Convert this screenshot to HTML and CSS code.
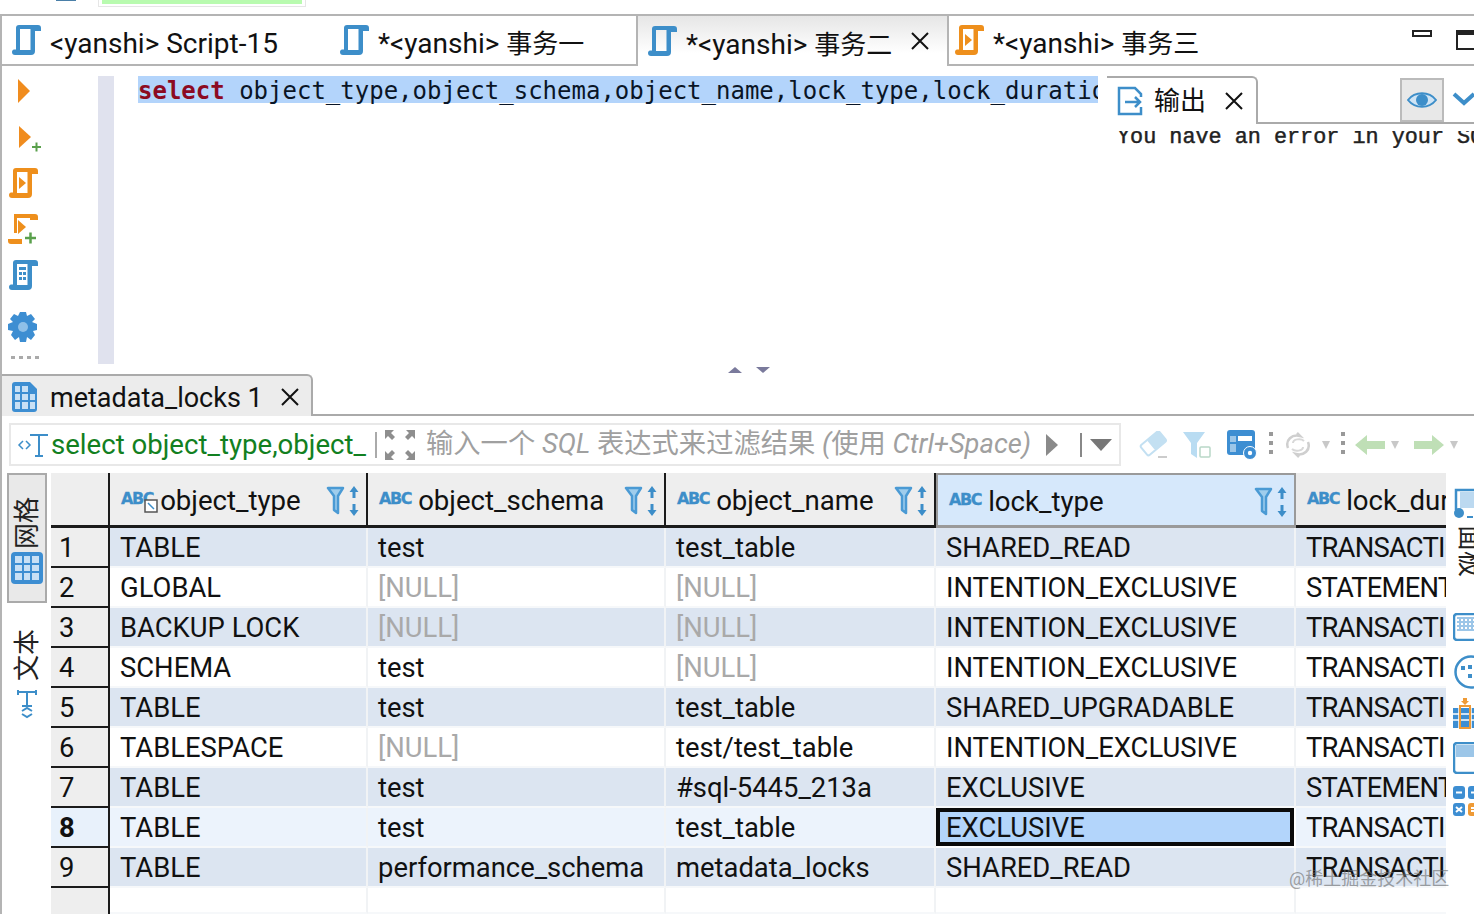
FILE: index.html
```html
<!DOCTYPE html>
<html lang="zh">
<head>
<meta charset="utf-8">
<title>DBeaver</title>
<link rel="stylesheet" href="styles.css">
</head>
<body>
<svg class="defs" width="0" height="0">
  <symbol id="scroll" viewBox="0 0 29 30"><path fill="currentColor" fill-rule="evenodd" d="M7 0H26a3 3 0 0 1 3 3v3h-6v20a4 4 0 0 1-4 4H3a3 3 0 0 1-3-3c0-1.500 1-2.500 2-2.500h2V3a3 3 0 0 1 3-3zM8 4v21h10.500V4z"/></symbol>
  <symbol id="funnel" viewBox="0 0 34 30"><path fill="#9fcdec" stroke="#4a9ad4" stroke-width="2.500" stroke-linejoin="round" d="M2 2h15l-5 8v17l-4-3V10z"/><path fill="#3d8ec9" d="M28 0l4.500 6h-3v6h-3V6h-3zM26.500 18h3v6h3L28 30l-4.500-6h3z"/></symbol>
  <symbol id="x" viewBox="0 0 20 20"><path fill="none" stroke="#111" stroke-width="2" d="M2 2l16 16M18 2L2 18"/></symbol>
</svg>
<div class="strip"><div class="strip-blue"></div><div class="strip-box"><div class="strip-green"></div></div></div>
<div class="app">
  <div class="tabbar">
    <div class="tab tab-1"><svg class="i-tab blue"><use href="#scroll"/></svg><span class="tl">&lt;yanshi&gt; Script-15</span></div>
    <div class="tab tab-2"><svg class="i-tab blue"><use href="#scroll"/></svg><span class="tl">*&lt;yanshi&gt; <span class="cjk">事务一</span></span></div>
    <div class="tab tab-3"><svg class="i-tab blue"><use href="#scroll"/></svg><span class="tl">*&lt;yanshi&gt; <span class="cjk">事务二</span></span><svg class="i-x"><use href="#x"/></svg></div>
    <div class="tab tab-4"><svg class="i-tab orange" viewBox="0 0 29 30"><use href="#scroll"/><path fill="currentColor" d="M10 9l7 6-7 6z"/></svg><span class="tl">*&lt;yanshi&gt; <span class="cjk">事务三</span></span></div>
    <div class="win-btns"><span class="win-min"></span><span class="win-max"></span></div>
  </div>
  <div class="editor">
    <div class="tools">
      <div class="tool"><svg class="t-run" width="14" height="24" viewBox="0 0 14 24"><path fill="#f08c1e" d="M1 0l12 12L1 24z"/></svg></div>
      <div class="tool"><svg class="t-plus" width="24" height="26" viewBox="0 0 24 26"><path fill="#f08c1e" d="M1 0l12 11L1 22z"/><path stroke="#5aa04c" stroke-width="2" d="M14 21h9M18.500 16.500v9"/></svg></div>
      <div class="tool"><svg class="orange" width="29" height="30" viewBox="0 0 29 30"><use href="#scroll"/><path fill="currentColor" d="M10 9l7 6-7 6z"/></svg></div>
      <div class="tool"><svg class="orange" width="31" height="32" viewBox="0 0 31 32"><path fill="currentColor" d="M6 1h21a3 3 0 0 1 3 3v3h-8V5H9v15H6zM0 26h14v5H3a3 3 0 0 1-3-3z"/><path fill="currentColor" d="M10 7l8 7-8 7z"/><path stroke="#5aa04c" stroke-width="2.500" d="M17 25h11M22.500 19.500v11"/></svg></div>
      <div class="tool"><svg class="blue" width="29" height="30" viewBox="0 0 29 30"><use href="#scroll"/><path fill="currentColor" d="M10 7h7v3h-7zM10 12h3v3h-3zM14 12h3v3h-3zM10 17h3v3h-3zM14 17h3v3h-3z"/></svg></div>
      <div class="tool tool-gear"><svg width="30" height="30" viewBox="0 0 30 30"><path fill="#3d8ed2" d="M12 0h6l1 4 4-2 4 5-3 3 5 2v6l-4 1 2 4-4 5-4-3-1 5h-6l-1-5-4 3-4-5 2-4-5-1v-6l5-2-3-3 4-5 4 2z"/><circle cx="15" cy="15" r="5" fill="#8fc0e8"/></svg></div>
      <div class="tool-dots"></div>
    </div>
    <div class="ruler"></div>
    <div class="code"><span class="sel"><b>select</b> object_type,object_schema,object_name,lock_type,lock_duration,lock_status,source from performance_schema.metadata_locks</span></div>
    <div class="output">
      <div class="out-head">
        <div class="out-tab"><svg class="i-out" width="26" height="30" viewBox="0 0 26 30"><path fill="none" stroke="#3d8ec9" stroke-width="2.500" d="M24 11V8l-6-6H2v26h22v-7"/><path fill="none" stroke="#3d8ec9" stroke-width="2.500" d="M8 16h15M18 11l5 5-5 5"/></svg>输出<svg class="i-x"><use href="#x"/></svg></div>
        <div class="out-fill"><span class="eye-btn"><svg width="30" height="20" viewBox="0 0 30 20"><path fill="#cfe4f5" stroke="#3d8ec9" stroke-width="2" d="M1 10C8 1 22 1 29 10 22 19 8 19 1 10z"/><circle cx="15" cy="10" r="6" fill="#3d8ec9"/></svg></span><svg class="chev" width="22" height="14" viewBox="0 0 22 14"><path fill="none" stroke="#3d8ec9" stroke-width="4" d="M2 2l10 9 10-9"/></svg></div>
      </div>
      <div class="out-text">You have an error in your SQL syntax</div>
    </div>
  </div>
  <div class="sash"><span class="sash-up"></span><span class="sash-down"></span></div>
  <div class="res-tabs"><div class="res-tab"><svg width="26" height="30" viewBox="0 0 26 30"><path fill="#3d8ed2" d="M3 0h15l7 7v20a3 3 0 0 1-3 3H3a3 3 0 0 1-3-3V3a3 3 0 0 1 3-3z"/><path fill="#c8e0f5" d="M3 4h5v6H3zM10 4h6v6h-6zM3 12h5v6H3zM10 12h6v6h-6zM18 12h5v6h-5zM3 20h5v7H3zM10 20h6v7h-6zM18 20h5v7h-5z"/></svg>metadata_locks 1<svg class="i-x"><use href="#x"/></svg></div></div>
  <div class="filter-row">
    <div class="filter">
      <svg class="f-t" width="32" height="26" viewBox="0 0 32 26"><path fill="none" stroke="#3d8ec9" stroke-width="1.500" d="M6 9l-4 4 4 4M9 9l4 4-4 4"/><path fill="none" stroke="#3d8ec9" stroke-width="2" d="M13 3h18M22 3v21M18 24h8"/></svg>
      <span class="f-sql">select object_type,object_</span>
      <span class="f-sep"></span>
      <svg class="f-expand" width="30" height="30" viewBox="0 0 30 30"><path fill="#8e8e8e" d="M0 0h9L6 3l4 4-3 3-4-4-3 3zM30 0v9l-3-3-4 4-3-3 4-4-3-3zM0 30v-9l3 3 4-4 3 3-4 4 3 3zM30 30h-9l3-3-4-4 3-3 4 4 3-3z"/></svg>
      <span class="f-hint">输入一个 <i>SQL</i> 表达式来过滤结果 <i>(</i>使用 <i>Ctrl+Space)</i></span>
      <span class="f-play"></span>
      <span class="f-sep2"></span>
      <span class="f-drop"></span>
    </div>
    <div class="bar">
      <svg width="30" height="28" viewBox="0 0 30 28"><g transform="rotate(-40 14 12)"><rect x="2" y="6" width="24" height="13" rx="2" fill="#fff" stroke="#c3e0f2" stroke-width="2"/><rect x="11" y="6" width="15" height="13" rx="2" fill="#c3e0f2"/></g><path stroke="#ccc" stroke-width="2" d="M19 26h9"/></svg>
      <svg width="30" height="28" viewBox="0 0 30 28"><path fill="#b9dcf2" d="M1 1h22l-8 11v15l-6-4V12z"/><rect x="18" y="16" width="10" height="10" rx="1" fill="#fff" stroke="#b9d8c8" stroke-width="1.500"/></svg>
      <svg width="30" height="30" viewBox="0 0 30 30"><rect x="0" y="0" width="28" height="25" rx="3" fill="#3d8ed2"/><path fill="#fff" d="M11 6h14v5H11z"/><path fill="#9cc6e8" d="M3 6h6v6H3zM3 14h6v8H3z"/><circle cx="23" cy="23" r="6.500" fill="#3d8ed2" stroke="#fff"/><circle cx="23" cy="23" r="2.200" fill="#fff"/></svg>
      <span class="bar-dots"></span>
      <svg class="b-ref" width="26" height="28" viewBox="0 0 26 28"><path fill="none" stroke="#cfcfcf" stroke-width="2.500" d="M3 17C0 9 7 3 15 5l-3-3M23 11c3 8-4 14-12 12l3 3"/><path fill="none" stroke="#d8d8d8" stroke-width="2" d="M8 12c0-4 8-5 11-2M18 16c0 4-8 5-11 2"/></svg>
      <span class="b-tri"></span>
      <span class="bar-dots d2"></span>
      <svg class="b-l" width="30" height="20" viewBox="0 0 30 20"><path fill="#bfdfb6" d="M0 10L12 0v6h18v8H12v6z"/></svg>
      <span class="b-tri t2"></span>
      <svg class="b-r" width="30" height="20" viewBox="0 0 30 20"><path fill="#bfdfb6" d="M30 10L18 0v6H0v8h18v6z"/></svg>
      <span class="b-tri t2"></span>
    </div>
  </div>
  <div class="body">
    <div class="side">
      <div class="side-active"><span class="vtext">网格</span><svg width="32" height="32" viewBox="0 0 32 32"><rect width="32" height="32" rx="4" fill="#3d8ed2"/><path fill="#c8e0f5" d="M4 4h7v7H4zM13 4h6v7h-6zM21 4h7v7h-7zM4 13h7v6H4zM13 13h6v6h-6zM21 13h7v6h-7zM4 21h7v7H4zM13 21h6v7h-6zM21 21h7v7h-7z"/></svg></div>
      <div class="side-idle"><span class="vtext">文本</span><svg width="20" height="30" viewBox="0 0 20 30"><path fill="none" stroke="#3d8ec9" stroke-width="2" d="M1 1v5M1 3h18M19 1v5M10 3v14M5 17h10M5 22l5-3 5 3M5 25l5 3 5-3"/></svg></div>
    </div>
    <div class="grid">
      <div class="hd corner"></div>
      <div class="hd"><span class="abc">ABC</span><svg class="key" width="14" height="14" viewBox="0 0 14 14"><rect x="1" y="1" width="12" height="12" fill="#fff" stroke="#555" stroke-width="1.500"/><path stroke="#3d8ec9" stroke-width="1.500" d="M4 4l6 6"/></svg><span class="hd-name">object_type</span><svg class="fn"><use href="#funnel"/></svg></div>
      <div class="hd"><span class="abc">ABC</span><span class="hd-name">object_schema</span><svg class="fn"><use href="#funnel"/></svg></div>
      <div class="hd"><span class="abc">ABC</span><span class="hd-name">object_name</span><svg class="fn"><use href="#funnel"/></svg></div>
      <div class="hd hd-sel"><span class="abc">ABC</span><span class="hd-name">lock_type</span><svg class="fn"><use href="#funnel"/></svg></div>
      <div class="hd hd-last"><span class="abc">ABC</span><span class="hd-name">lock_duration</span></div>

      <div class="rh">1</div><div class="c odd">TABLE</div><div class="c odd">test</div><div class="c odd">test_table</div><div class="c odd">SHARED_READ</div><div class="c odd last">TRANSACTION</div>
      <div class="rh">2</div><div class="c">GLOBAL</div><div class="c nul">[NULL]</div><div class="c nul">[NULL]</div><div class="c">INTENTION_EXCLUSIVE</div><div class="c last">STATEMENT</div>
      <div class="rh">3</div><div class="c odd">BACKUP LOCK</div><div class="c odd nul">[NULL]</div><div class="c odd nul">[NULL]</div><div class="c odd">INTENTION_EXCLUSIVE</div><div class="c odd last">TRANSACTION</div>
      <div class="rh">4</div><div class="c">SCHEMA</div><div class="c">test</div><div class="c nul">[NULL]</div><div class="c">INTENTION_EXCLUSIVE</div><div class="c last">TRANSACTION</div>
      <div class="rh">5</div><div class="c odd">TABLE</div><div class="c odd">test</div><div class="c odd">test_table</div><div class="c odd">SHARED_UPGRADABLE</div><div class="c odd last">TRANSACTION</div>
      <div class="rh">6</div><div class="c">TABLESPACE</div><div class="c nul">[NULL]</div><div class="c">test/test_table</div><div class="c">INTENTION_EXCLUSIVE</div><div class="c last">TRANSACTION</div>
      <div class="rh">7</div><div class="c odd">TABLE</div><div class="c odd">test</div><div class="c odd">#sql-5445_213a</div><div class="c odd">EXCLUSIVE</div><div class="c odd last">STATEMENT</div>
      <div class="rh rh-sel">8</div><div class="c cur">TABLE</div><div class="c cur">test</div><div class="c cur">test_table</div><div class="c cell-sel">EXCLUSIVE</div><div class="c cur last">TRANSACTION</div>
      <div class="rh">9</div><div class="c odd">TABLE</div><div class="c odd">performance_schema</div><div class="c odd">metadata_locks</div><div class="c odd">SHARED_READ</div><div class="c odd last">TRANSACTION</div>
      <div class="rh rh-end"></div><div class="c"></div><div class="c"></div><div class="c"></div><div class="c"></div><div class="c last"></div>
    </div>
    <div class="rside">
      <svg class="r1" width="26" height="32" viewBox="0 0 26 32"><path fill="none" stroke="#3d8ec9" stroke-width="2.500" d="M3 22V2h23"/><rect x="7" y="4" width="19" height="16" fill="#bcd9f0"/><circle cx="6" cy="25" r="5" fill="#3d8ec9"/><path stroke="#3d8ec9" stroke-width="2" d="M14 29h6"/></svg>
      <span class="rtext">面板</span>
      <svg class="r2" width="26" height="28" viewBox="0 0 26 28"><rect x="1" y="1" width="30" height="26" rx="3" fill="#fff" stroke="#3d8ec9" stroke-width="2.500"/><rect x="4" y="4" width="22" height="14" fill="#9cc6e8"/><path stroke="#fff" stroke-dasharray="2 2" stroke-width="2" d="M4 7h22M4 11h22M4 15h22"/></svg>
      <svg class="r3" width="26" height="34" viewBox="0 0 26 34"><circle cx="18" cy="17" r="15.500" fill="#fff" stroke="#3d8ec9" stroke-width="2.500"/><path fill="#3d8ec9" d="M8 11h4v4H8zM15 10h4v4h-4zM22 10h4v4h-4zM15 19h4v4h-4zM22 19h4v4h-4z"/></svg>
      <svg class="r4" width="26" height="32" viewBox="0 0 26 32"><rect x="0" y="10" width="26" height="20" fill="#3d8ed2"/><path stroke="#fff" stroke-width="1.500" d="M0 16h26M0 22h26M6 10v20M18 10v20"/><rect x="7" y="8" width="10" height="22" fill="none" stroke="#ee9a36" stroke-width="2"/><path fill="#ee9a36" d="M10 0h4v3h2l-4 4-4-4h2z"/></svg>
      <svg class="r5" width="26" height="32" viewBox="0 0 26 32"><rect x="1" y="1" width="30" height="30" rx="3" fill="#fff" stroke="#3d8ec9" stroke-width="2.500"/><rect x="3" y="3" width="23" height="12" fill="#9cc6e8"/></svg>
      <svg class="r6" width="26" height="30" viewBox="0 0 26 30"><rect x="0" y="0" width="12" height="13" rx="3" fill="#3d8ed2"/><rect x="15" y="0" width="12" height="13" rx="3" fill="#3d8ed2"/><rect x="0" y="17" width="12" height="13" rx="3" fill="#3d8ed2"/><rect x="15" y="17" width="12" height="13" rx="3" fill="#ee9a36"/><path stroke="#fff" stroke-width="2" d="M3 6.500h6M18 6.500h6M3 21l6 5M9 21l-6 5M18 22h6M18 25h6"/></svg>
    </div>
  </div>
</div>
<div class="watermark">@稀土掘金技术社区</div>
</body>
</html>
```
FILE: styles.css
```css
* { box-sizing: border-box; }
html, body { margin: 0; padding: 0; }
body {
  position: relative;
  width: 1474px;
  height: 914px;
  overflow: hidden;
  background: #fff;
  color: #111;
  font-family: Roboto, "Noto Sans CJK SC", sans-serif;
  font-size: 27.4px;
}
svg { display: block; flex: none; }
.defs { position: absolute; }
.blue { color: #3d8ec9; }
.orange { color: #ee8f1c; }

.strip { height: 14px; display: flex; align-items: flex-start; }
.strip-blue { width: 20px; height: 1px; margin-left: 56px; background: #4a7fa8; }
.strip-box { width: 208px; height: 7px; margin-left: 22px; padding: 0 3px; background: #fff; border: 1px solid #e6e6e6; border-top: 0; }
.strip-green { height: 4px; background: #b9fbb0; }

.app { height: 900px; border-left: 2px solid #b4b4b4; display: flex; flex-direction: column; }

.tabbar {
  height: 52px;
  flex: none;
  display: flex;
  align-items: stretch;
  border-top: 2px solid #b4b4b4;
  border-bottom: 2px solid #b4b4b4;
  white-space: nowrap;
  font-size: 28px;
  line-height: 30px;
}
.tab { display: flex; align-items: center; padding-left: 10px; }
.tl { margin-top: 8px; }
.cjk { font-size: 26px; }
.i-tab { width: 29px; height: 30px; margin-right: 9px; }
.tab-1 { width: 329px; }
.tab-2 { width: 307px; border-right: 2px solid #b4b4b4; padding-left: 9px; }
.tab-3 {
  width: 309px;
  margin-bottom: -2px;
  background: linear-gradient(#e6e6e6, #fff 75%);
}
.tab-4 { width: 448px; border-left: 2px solid #b4b4b4; padding-left: 6px; }
.i-x { width: 20px; height: 20px; margin-left: 18px; }
.win-btns { display: flex; align-items: flex-start; margin-left: 17px; padding-top: 14px; overflow: hidden; flex: 1; }
.win-min { width: 20px; height: 7px; border: 2px solid #222; flex: none; }
.win-max { width: 24px; height: 20px; margin-left: 24px; border: 2px solid #222; border-top-width: 5px; flex: none; }

.editor { height: 298px; flex: none; display: flex; }
.tools { width: 96px; flex: none; padding: 2px 0 0 6px; display: flex; flex-direction: column; align-items: flex-start; }
.tool { height: 46px; width: 30px; display: flex; align-items: center; justify-content: center; }
.t-run { margin-left: 2px; }
.t-plus { margin: 3px 0 0 13px; }
.tool-gear { margin-top: 6px; }
.tool-dots { width: 29px; height: 3px; margin: 6px 0 0 3px; background: repeating-linear-gradient(90deg, #aaa 0 4px, transparent 4px 8px); }
.ruler { width: 16px; flex: none; margin-top: 10px; background: #e0e2ee; }
.code {
  width: 984px;
  flex: none;
  padding: 10px 0 0 24px;
  overflow: hidden;
  white-space: nowrap;
  font: 24px/24px "DejaVu Sans Mono", monospace;
  color: #0a1526;
}
.sel { display: inline-block; padding-top: 3px; background: #b3d4fb; }
.sel b { color: #8c0a22; }
.output { flex: 1; min-width: 0; margin-left: 9px; padding-top: 10px; overflow: hidden; }
.out-head { display: flex; height: 48px; }
.out-tab {
  width: 151px;
  flex: none;
  display: flex;
  align-items: center;
  padding-left: 10px;
  border-top: 2px solid #aaa;
  border-right: 2px solid #aaa;
  border-top-right-radius: 6px;
  white-space: nowrap;
  line-height: 30px;
  font-size: 26px;
}
.i-out { margin-right: 11px; }
.out-fill { flex: 1; display: flex; align-items: flex-start; padding-left: 142px; border-bottom: 2px solid #aaa; }
.eye-btn { width: 44px; height: 44px; margin-top: 2px; display: flex; align-items: center; justify-content: center; background: #e8e8e8; border: 2px solid #bbb; }
.chev { margin: 16px 0 0 8px; }
.out-text {
  height: 28px;
  margin-top: -4px;
  padding: 0 0 0 10px;
  overflow: hidden;
  white-space: nowrap;
  font: 21.8px/35px "Liberation Mono", monospace;
  -webkit-text-stroke: .45px #222;
  color: #222;
  clip-path: inset(11px 0 0 0);
}

.sash { height: 10px; flex: none; display: flex; justify-content: center; gap: 14px; padding: 3px 0 0 22px; }
.sash-up { border: 7px solid transparent; border-top: 0; border-bottom: 6px solid #7a7a9c; height: 0; width: 0; }
.sash-down { border: 7px solid transparent; border-bottom: 0; border-top: 6px solid #7a7a9c; height: 0; width: 0; }

.res-tabs { height: 42px; flex: none; border-bottom: 2px solid #aaa; display: flex; }
.res-tab {
  width: 311px;
  margin-bottom: -2px;
  display: flex;
  align-items: center;
  padding: 4px 0 0 10px;
  background: #ececec;
  border-top: 2px solid #aaa;
  border-right: 2px solid #aaa;
  border-top-right-radius: 6px;
  white-space: nowrap;
  font-size: 27px;
  line-height: 30px;
}
.res-tab svg:first-child { margin: -2px 12px 0 0; }
.res-tab .i-x { margin: -2px 0 0 17px; }

.filter-row { height: 57px; flex: none; display: flex; padding: 7px 0 7px 7px; align-items: stretch; }
.filter {
  width: 1112px;
  flex: none;
  display: flex;
  align-items: center;
  padding-left: 6px;
  border: 2px solid #e8e8e8;
  white-space: nowrap;
  line-height: 30px;
}
.f-t { margin-right: 2px; }
.f-sql { width: 316px; overflow: hidden; color: #128021; flex: none; font-size: 27.6px; }
.f-sep { width: 2px; height: 26px; background: #aaa; margin: 0 8px 0 8px; flex: none; }
.f-expand { margin-right: 11px; }
.f-hint { width: 620px; flex: none; color: #a0a0a0; overflow: hidden; margin-top: -2px; font-size: 27.3px; }
.f-play { width: 0; height: 0; border-left: 12px solid #8a8a8a; border-top: 11px solid transparent; border-bottom: 11px solid transparent; margin-right: 22px; }
.f-sep2 { width: 2px; height: 24px; background: #888; margin-right: 8px; }
.f-drop { width: 0; height: 0; border-top: 12px solid #777; border-left: 11px solid transparent; border-right: 11px solid transparent; }
.bar { display: flex; align-items: center; gap: 13px; padding-left: 18px; overflow: hidden; flex: 1; }
.bar svg:nth-child(3) { margin-left: 2px; margin-right: -1px; }
.bar-dots { width: 4px; height: 26px; background: repeating-linear-gradient(#999 0 4px, transparent 4px 9px); flex: none; }
.b-ref { margin-left: -1px; }
.b-tri { width: 0; height: 0; border-top: 8px solid #c8c8c8; border-left: 4px solid transparent; border-right: 4px solid transparent; margin-left: -2px; flex: none; }
.d2 { margin-left: -2px; }
.b-l { margin-left: -3px; }
.t2 { margin-left: -7px; }
.b-r { margin-left: 2px; }

.body { flex: 1; min-height: 0; display: flex; }
.side { width: 49px; flex: none; }
.side-active {
  width: 40px;
  height: 130px;
  margin-left: 5px;
  padding-top: 22px;
  background: #e9e9e9;
  border: 2px solid #aaa;
  display: flex;
  flex-direction: column;
  align-items: center;
  gap: 3px;
}
.side-idle { margin: 26px 0 0 5px; width: 40px; display: flex; flex-direction: column; align-items: center; gap: 8px; }
.vtext { writing-mode: vertical-rl; text-orientation: sideways; transform: rotate(180deg); line-height: 1; font-size: 26px; color: #222; }

.grid {
  width: 1395px;
  flex: none;
  display: grid;
  grid-template-columns: 59px 258px 298px 270px 360px 150px;
  grid-template-rows: 55px repeat(9, 40px) 26px;
  overflow: hidden;
  white-space: nowrap;
}
.hd {
  display: flex;
  align-items: center;
  padding: 3px 0 0 11px;
  background: #eee;
  border-right: 2px solid #1b1b1b;
  border-bottom: 3px solid #1b1b1b;
  overflow: hidden;
  font-size: 27.6px;
  line-height: 30px;
}
.corner { border-right: 2px solid #1b1b1b; }
.abc { font: bold 16px/1 "DejaVu Sans", sans-serif; letter-spacing: -1.400px; color: #3d8ec9; -webkit-text-stroke: .3px #3d8ec9; margin: -3px 7px 0 0; }
.key { margin: 10px 2px 0 -16px; }
.hd-name { flex: 1; }
.fn { width: 34px; height: 30px; margin-right: 6px; }
.hd-sel { background: #d6e8fb; border: 2px solid #9a9a9a; border-bottom-width: 3px; }
.hd-last { border-right: 0; background: #ebebeb; }
.rh {
  padding-left: 8px;
  line-height: 41px;
  background: #eee;
  border-right: 2px solid #1b1b1b;
  border-bottom: 2px solid #1b1b1b;
  overflow: hidden;
}
.rh-sel { font-weight: 700; background: #e8f1fb; }
.rh-end { border-bottom: 0; }
.c {
  padding-left: 10px;
  line-height: 40px;
  border-right: 2px solid #f1f3f5;
  border-bottom: 2px solid #f6f8fa;
  overflow: hidden;
}
.odd { background: #dce5f1; }
.cur { background: #ecf3fc; }
.nul { color: #a9a9a9; }
.last { border-right: 0; letter-spacing: -.8px; }
.cell-sel { margin: 0 2px 2px 0; background: #b3d5fb; border: 4px solid #0a0a0a; padding-left: 6px; line-height: 32px; }

.rside { flex: 1; min-width: 0; overflow: hidden; padding-left: 7px; display: flex; flex-direction: column; align-items: flex-start; }
.r1 { margin-top: 15px; }
.rtext { writing-mode: vertical-rl; text-orientation: sideways; line-height: 1; margin: 5px 0 0 4px; font-size: 26px; height: 54px; width: 26px; flex: none; color: #222; }
.r2 { margin-top: 34px; }
.r3 { margin-top: 14px; }
.r4 { margin-top: 9px; }
.r5 { margin-top: 12px; }
.r6 { margin-top: 12px; }

.watermark {
  position: absolute;
  left: 1289px;
  top: 868px;
  font-size: 18px;
  line-height: 22px;
  color: rgba(105, 105, 105, .6);
  white-space: nowrap;
}
```
